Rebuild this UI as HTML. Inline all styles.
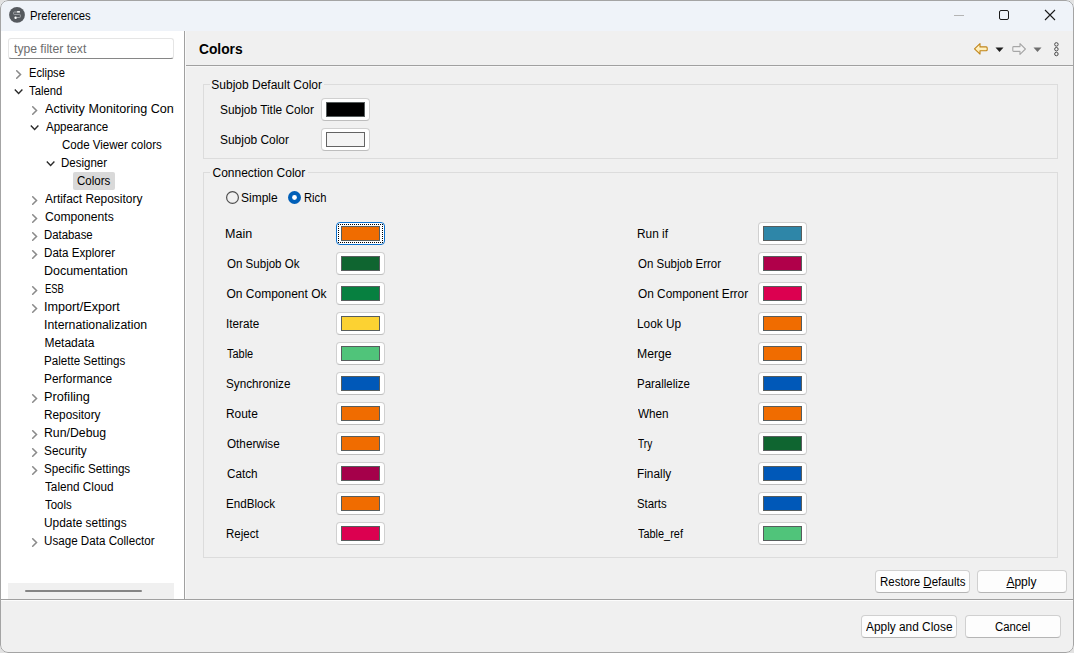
<!DOCTYPE html>
<html><head><meta charset="utf-8">
<style>
html,body{margin:0;padding:0;width:1074px;height:653px;overflow:hidden;background:#e2e2e2;}
body{font-family:"Liberation Sans", sans-serif;font-size:12px;color:#000;position:relative;}
.abs{position:absolute;}
.t{position:absolute;height:18px;line-height:18px;white-space:nowrap;transform-origin:0 0;}
.cb{position:absolute;box-sizing:border-box;width:49px;height:23px;background:#fff;border:1px solid #d0d0d0;border-bottom-color:#bdbdbd;border-radius:4px;}
.sw{position:absolute;box-sizing:border-box;width:39px;height:15px;border:1px solid #575d5d;}
.btn{position:absolute;box-sizing:border-box;height:23px;background:#fdfdfd;border:1px solid #d0d0d0;border-bottom-color:#b5b5b5;border-radius:4px;}
</style></head><body>
<div class="abs" style="left:0;top:0;width:1074px;height:653px;border-radius:8px;overflow:hidden;background:#f0f0f0">
  <!-- title bar -->
  <div class="abs" style="left:0;top:0;width:1074px;height:31px;background:#eff3f9"></div>
  <svg class="abs" style="left:8px;top:6px" width="18" height="18" viewBox="0 0 18 18">
    <circle cx="9" cy="8.9" r="7.9" fill="#55595e"/>
    <path d="M9.3 6 H6.2 Q5.6 6 5.6 6.6 V7.8 Q5.6 8.4 6.2 8.4 H11.7 Q12.3 8.4 12.3 9 V10.9 Q12.3 11.5 11.7 11.5 H9" fill="none" stroke="#a9acb0" stroke-width="0.9"/>
    <rect x="9.1" y="5.1" width="2.8" height="1.5" fill="#fff"/>
    <circle cx="7.6" cy="11.8" r="1.2" fill="#fff"/>
  </svg>
  <div class="t" style="left:29.76px;top:7px;transform:scaleX(0.9391);">Preferences</div>
  <div class="abs" style="left:954px;top:15px;width:10px;height:1px;background:#b4b4b4"></div>
  <div class="abs" style="left:999px;top:10px;width:8px;height:8px;border:1px solid #1a1a1a;border-radius:2px"></div>
  <svg class="abs" style="left:1044px;top:9px" width="12" height="12" viewBox="0 0 12 12"><path d="M1 1 L11 11 M11 1 L1 11" stroke="#1a1a1a" stroke-width="1.1"/></svg>

  <!-- left panel -->
  <div class="abs" style="left:1px;top:31px;width:183px;height:568px;background:#fff"></div>
  <div class="abs" style="left:8px;top:38px;width:166px;height:21px;box-sizing:border-box;background:#fff;border:1px solid #e5e5e5;border-bottom:1px solid #868686;border-radius:3px;"></div>
  <div class="t" style="left:14.00px;top:40px;transform:scaleX(1.0125);color:#6d6d6d;">type filter text</div>
  <div class="abs" style="left:0;top:0;width:174px;height:600px;overflow:hidden">
  <svg class="abs" style="left:13px;top:64px" width="10" height="18" viewBox="0 0 10 18"><path d="M3.7 6.7 L7.5 10.5 L3.7 14.3" fill="none" stroke="#8a8a8a" stroke-width="1.55" stroke-linecap="round"/></svg>
<div class="t" style="left:28.87px;top:64px;transform:scaleX(0.9263);">Eclipse</div>
<svg class="abs" style="left:13px;top:82px" width="12" height="18" viewBox="0 0 12 18"><path d="M1.8 7.6 L5.6 11.4 L9.4 7.6" fill="none" stroke="#2a2a2a" stroke-width="1.4"/></svg>
<div class="t" style="left:29.20px;top:82px;transform:scaleX(0.9400);">Talend</div>
<svg class="abs" style="left:29px;top:100px" width="10" height="18" viewBox="0 0 10 18"><path d="M3.7 6.7 L7.5 10.5 L3.7 14.3" fill="none" stroke="#8a8a8a" stroke-width="1.55" stroke-linecap="round"/></svg>
<div class="t" style="left:44.55px;top:100px;transform:scaleX(1.050)">Activity Monitoring Configuration</div>
<svg class="abs" style="left:29px;top:118px" width="12" height="18" viewBox="0 0 12 18"><path d="M1.8 7.6 L5.6 11.4 L9.4 7.6" fill="none" stroke="#2a2a2a" stroke-width="1.4"/></svg>
<div class="t" style="left:45.60px;top:118px;transform:scaleX(0.9615);">Appearance</div>
<div class="t" style="left:61.70px;top:136px;transform:scaleX(0.9615);">Code Viewer colors</div>
<svg class="abs" style="left:45px;top:154px" width="12" height="18" viewBox="0 0 12 18"><path d="M1.8 7.6 L5.6 11.4 L9.4 7.6" fill="none" stroke="#2a2a2a" stroke-width="1.4"/></svg>
<div class="t" style="left:60.74px;top:154px;transform:scaleX(0.9596);">Designer</div>
<div class="abs" style="left:73px;top:172px;width:42px;height:18px;background:#d9d9d9;border-radius:2px"></div>
<div class="t" style="left:77.40px;top:172px;transform:scaleX(0.9600);">Colors</div>
<svg class="abs" style="left:29px;top:190px" width="10" height="18" viewBox="0 0 10 18"><path d="M3.7 6.7 L7.5 10.5 L3.7 14.3" fill="none" stroke="#8a8a8a" stroke-width="1.55" stroke-linecap="round"/></svg>
<div class="t" style="left:45.20px;top:190px;transform:scaleX(0.9929);">Artifact Repository</div>
<svg class="abs" style="left:29px;top:208px" width="10" height="18" viewBox="0 0 10 18"><path d="M3.7 6.7 L7.5 10.5 L3.7 14.3" fill="none" stroke="#8a8a8a" stroke-width="1.55" stroke-linecap="round"/></svg>
<div class="t" style="left:45.20px;top:208px;transform:scaleX(1.0103);">Components</div>
<svg class="abs" style="left:29px;top:226px" width="10" height="18" viewBox="0 0 10 18"><path d="M3.7 6.7 L7.5 10.5 L3.7 14.3" fill="none" stroke="#8a8a8a" stroke-width="1.55" stroke-linecap="round"/></svg>
<div class="t" style="left:44.45px;top:226px;transform:scaleX(0.9480);">Database</div>
<svg class="abs" style="left:29px;top:244px" width="10" height="18" viewBox="0 0 10 18"><path d="M3.7 6.7 L7.5 10.5 L3.7 14.3" fill="none" stroke="#8a8a8a" stroke-width="1.55" stroke-linecap="round"/></svg>
<div class="t" style="left:44.43px;top:244px;transform:scaleX(0.9681);">Data Explorer</div>
<div class="t" style="left:44.36px;top:262px;transform:scaleX(1.0380);">Documentation</div>
<svg class="abs" style="left:29px;top:280px" width="10" height="18" viewBox="0 0 10 18"><path d="M3.7 6.7 L7.5 10.5 L3.7 14.3" fill="none" stroke="#8a8a8a" stroke-width="1.55" stroke-linecap="round"/></svg>
<div class="t" style="left:44.91px;top:280px;transform:scaleX(0.7870);">ESB</div>
<svg class="abs" style="left:29px;top:298px" width="10" height="18" viewBox="0 0 10 18"><path d="M3.7 6.7 L7.5 10.5 L3.7 14.3" fill="none" stroke="#8a8a8a" stroke-width="1.55" stroke-linecap="round"/></svg>
<div class="t" style="left:44.35px;top:298px;transform:scaleX(1.0507);">Import/Export</div>
<div class="t" style="left:44.38px;top:316px;transform:scaleX(1.0232);">Internationalization</div>
<div class="t" style="left:44.40px;top:334px;">Metadata</div>
<div class="t" style="left:44.43px;top:352px;transform:scaleX(0.9675);">Palette Settings</div>
<div class="t" style="left:44.41px;top:370px;transform:scaleX(0.9912);">Performance</div>
<svg class="abs" style="left:29px;top:388px" width="10" height="18" viewBox="0 0 10 18"><path d="M3.7 6.7 L7.5 10.5 L3.7 14.3" fill="none" stroke="#8a8a8a" stroke-width="1.55" stroke-linecap="round"/></svg>
<div class="t" style="left:44.34px;top:388px;transform:scaleX(1.0595);">Profiling</div>
<div class="t" style="left:44.41px;top:406px;transform:scaleX(0.9857);">Repository</div>
<svg class="abs" style="left:29px;top:424px" width="10" height="18" viewBox="0 0 10 18"><path d="M3.7 6.7 L7.5 10.5 L3.7 14.3" fill="none" stroke="#8a8a8a" stroke-width="1.55" stroke-linecap="round"/></svg>
<div class="t" style="left:44.38px;top:424px;transform:scaleX(1.0237);">Run/Debug</div>
<svg class="abs" style="left:29px;top:442px" width="10" height="18" viewBox="0 0 10 18"><path d="M3.7 6.7 L7.5 10.5 L3.7 14.3" fill="none" stroke="#8a8a8a" stroke-width="1.55" stroke-linecap="round"/></svg>
<div class="t" style="left:44.41px;top:442px;transform:scaleX(0.9857);">Security</div>
<svg class="abs" style="left:29px;top:460px" width="10" height="18" viewBox="0 0 10 18"><path d="M3.7 6.7 L7.5 10.5 L3.7 14.3" fill="none" stroke="#8a8a8a" stroke-width="1.55" stroke-linecap="round"/></svg>
<div class="t" style="left:44.43px;top:460px;transform:scaleX(0.9716);">Specific Settings</div>
<div class="t" style="left:45.40px;top:478px;transform:scaleX(0.9771);">Talend Cloud</div>
<div class="t" style="left:45.40px;top:496px;transform:scaleX(0.9536);">Tools</div>
<div class="t" style="left:44.41px;top:514px;transform:scaleX(0.9902);">Update settings</div>
<svg class="abs" style="left:29px;top:532px" width="10" height="18" viewBox="0 0 10 18"><path d="M3.7 6.7 L7.5 10.5 L3.7 14.3" fill="none" stroke="#8a8a8a" stroke-width="1.55" stroke-linecap="round"/></svg>
<div class="t" style="left:44.43px;top:532px;transform:scaleX(0.9690);">Usage Data Collector</div>
  </div>
  <div class="abs" style="left:8px;top:583px;width:166px;height:16px;background:#f0f0f0"></div>
  <div class="abs" style="left:25px;top:590px;width:117px;height:2px;background:#858585;border-radius:1px"></div>
  <div class="abs" style="left:184px;top:31px;width:1px;height:568px;background:#a0a0a0"></div>
  <div class="abs" style="left:185px;top:31px;width:1px;height:568px;background:#f9f9f9"></div>

  <!-- header -->
  <div class="t" style="left:199.00px;top:40px;transform:scaleX(0.9841);font-size:14px;"><b>Colors</b></div>
  <div class="abs" style="left:186px;top:65px;width:888px;height:1px;background:#a0a0a0"></div>
  <div class="abs" style="left:186px;top:66px;width:888px;height:1px;background:#f7f7f7"></div>
  <svg class="abs" style="left:972px;top:42px" width="17" height="14" viewBox="0 0 17 14"><defs><linearGradient id="bg1" x1="0" y1="0" x2="0" y2="1"><stop offset="0" stop-color="#fff8dc"/><stop offset="1" stop-color="#ffe7a0"/></linearGradient></defs><path d="M2.5 6.9 L8 1.6 V4.9 H14.2 Q15.2 4.9 15.2 5.9 V7.8 Q15.2 8.8 14.2 8.8 H8 V12.1 Z" fill="url(#bg1)" stroke="#c08418" stroke-width="1.1" stroke-linejoin="round"/></svg>
  <svg class="abs" style="left:995px;top:46.5px" width="9" height="6" viewBox="0 0 9 6"><path d="M0.5 0.5 H8.5 L4.5 5 Z" fill="#1e1e1e"/></svg>
  <svg class="abs" style="left:1011px;top:42px" width="17" height="14" viewBox="0 0 17 14"><path d="M14.4 7 L9 1.6 V4.6 H2.7 Q1.8 4.6 1.8 5.5 V8.5 Q1.8 9.4 2.7 9.4 H9 V12.4 Z" fill="#f4f4f4" stroke="#a6a6a6" stroke-width="1.1" stroke-linejoin="round"/></svg>
  <svg class="abs" style="left:1033px;top:46.5px" width="9" height="6" viewBox="0 0 9 6"><path d="M0.5 0.5 H8.5 L4.5 5 Z" fill="#6e6e6e"/></svg>
  <svg class="abs" style="left:1052px;top:41px" width="8" height="17" viewBox="0 0 8 17"><circle cx="4.4" cy="3.4" r="1.75" fill="none" stroke="#4a4a4a" stroke-width="1"/><circle cx="4.4" cy="8.2" r="1.75" fill="none" stroke="#4a4a4a" stroke-width="1"/><circle cx="4.4" cy="13" r="1.75" fill="none" stroke="#4a4a4a" stroke-width="1"/></svg>

  <!-- group 1 -->
  <div class="abs" style="left:203px;top:84px;width:855px;height:75px;box-sizing:border-box;border:1px solid #dcdcdc"></div>
  <div class="abs" style="left:210px;top:80px;width:114px;height:8px;background:#f0f0f0"></div>
  <div class="t" style="left:211.30px;top:76px;">Subjob Default Color</div>
  <div class="t" style="left:220.31px;top:101px;transform:scaleX(0.9915);">Subjob Title Color</div>
  <div class="cb" style="left:321px;top:98px"></div><div class="sw" style="left:326px;top:102px;background:#000"></div>
  <div class="t" style="left:220.31px;top:131px;transform:scaleX(0.9942);">Subjob Color</div>
  <div class="cb" style="left:321px;top:128px"></div><div class="sw" style="left:326px;top:132px;background:#f4f4f4;border-color:#646464"></div>

  <!-- group 2 -->
  <div class="abs" style="left:203px;top:172px;width:855px;height:386px;box-sizing:border-box;border:1px solid #dcdcdc"></div>
  <div class="abs" style="left:210px;top:168px;width:98px;height:8px;background:#f0f0f0"></div>
  <div class="t" style="left:212.50px;top:164px;">Connection Color</div>
  <svg class="abs" style="left:226px;top:191px" width="13" height="13" viewBox="0 0 13 13"><circle cx="6.5" cy="6.5" r="5.9" fill="none" stroke="#4f4f4f" stroke-width="1.2"/></svg>
  <div class="t" style="left:241.00px;top:189px;">Simple</div>
  <svg class="abs" style="left:288px;top:191px" width="13" height="13" viewBox="0 0 13 13"><circle cx="6.5" cy="6.5" r="6.5" fill="#005fb8"/><circle cx="6.5" cy="6.5" r="2.4" fill="#fff"/></svg>
  <div class="t" style="left:303.87px;top:189px;transform:scaleX(0.9304);">Rich</div>
  <div class="t" style="left:225.46px;top:225px;transform:scaleX(1.0440);">Main</div>
<div class="cb" style="left:336px;top:222px;border-color:#0a6fcc"></div><div class="abs" style="left:338px;top:224px;width:45px;height:19px;box-sizing:border-box;border:1px dotted #000"></div><div class="sw" style="left:341px;top:226px;background:#f06c00"></div>
<div class="t" style="left:226.50px;top:255px;transform:scaleX(0.9618);">On Subjob Ok</div>
<div class="cb" style="left:336px;top:252px"></div><div class="sw" style="left:341px;top:256px;background:#0f6530"></div>
<div class="t" style="left:226.50px;top:285px;">On Component Ok</div>
<div class="cb" style="left:336px;top:282px"></div><div class="sw" style="left:341px;top:286px;background:#078040"></div>
<div class="t" style="left:225.52px;top:315px;transform:scaleX(0.9758);">Iterate</div>
<div class="cb" style="left:336px;top:312px"></div><div class="sw" style="left:341px;top:316px;background:#fcd232"></div>
<div class="t" style="left:226.50px;top:345px;transform:scaleX(0.9138);">Table</div>
<div class="cb" style="left:336px;top:342px"></div><div class="sw" style="left:341px;top:346px;background:#50c47a"></div>
<div class="t" style="left:225.52px;top:375px;transform:scaleX(0.9754);">Synchronize</div>
<div class="cb" style="left:336px;top:372px"></div><div class="sw" style="left:341px;top:376px;background:#0058b8"></div>
<div class="t" style="left:225.51px;top:405px;transform:scaleX(0.9935);">Route</div>
<div class="cb" style="left:336px;top:402px"></div><div class="sw" style="left:341px;top:406px;background:#f06c00"></div>
<div class="t" style="left:226.50px;top:435px;transform:scaleX(0.9759);">Otherwise</div>
<div class="cb" style="left:336px;top:432px"></div><div class="sw" style="left:341px;top:436px;background:#f06c00"></div>
<div class="t" style="left:226.50px;top:465px;transform:scaleX(0.9774);">Catch</div>
<div class="cb" style="left:336px;top:462px"></div><div class="sw" style="left:341px;top:466px;background:#a5004a"></div>
<div class="t" style="left:225.53px;top:495px;transform:scaleX(0.9680);">EndBlock</div>
<div class="cb" style="left:336px;top:492px"></div><div class="sw" style="left:341px;top:496px;background:#f06c00"></div>
<div class="t" style="left:225.54px;top:525px;transform:scaleX(0.9576);">Reject</div>
<div class="cb" style="left:336px;top:522px"></div><div class="sw" style="left:341px;top:526px;background:#dc0050"></div>
<div class="t" style="left:637.41px;top:225px;transform:scaleX(0.9871);">Run if</div>
<div class="cb" style="left:758px;top:222px"></div><div class="sw" style="left:763px;top:226px;background:#2e86a8"></div>
<div class="t" style="left:638.40px;top:255px;transform:scaleX(0.9575);">On Subjob Error</div>
<div class="cb" style="left:758px;top:252px"></div><div class="sw" style="left:763px;top:256px;background:#b0004a"></div>
<div class="t" style="left:638.40px;top:285px;transform:scaleX(0.9884);">On Component Error</div>
<div class="cb" style="left:758px;top:282px"></div><div class="sw" style="left:763px;top:286px;background:#dc0050"></div>
<div class="t" style="left:637.41px;top:315px;transform:scaleX(0.9864);">Look Up</div>
<div class="cb" style="left:758px;top:312px"></div><div class="sw" style="left:763px;top:316px;background:#f06c00"></div>
<div class="t" style="left:637.38px;top:345px;transform:scaleX(1.0182);">Merge</div>
<div class="cb" style="left:758px;top:342px"></div><div class="sw" style="left:763px;top:346px;background:#f06c00"></div>
<div class="t" style="left:637.44px;top:375px;transform:scaleX(0.9556);">Parallelize</div>
<div class="cb" style="left:758px;top:372px"></div><div class="sw" style="left:763px;top:376px;background:#0058b8"></div>
<div class="t" style="left:638.40px;top:405px;transform:scaleX(0.9774);">When</div>
<div class="cb" style="left:758px;top:402px"></div><div class="sw" style="left:763px;top:406px;background:#f06c00"></div>
<div class="t" style="left:638.40px;top:435px;transform:scaleX(0.8412);">Try</div>
<div class="cb" style="left:758px;top:432px"></div><div class="sw" style="left:763px;top:436px;background:#0f6530"></div>
<div class="t" style="left:637.41px;top:465px;transform:scaleX(0.9853);">Finally</div>
<div class="cb" style="left:758px;top:462px"></div><div class="sw" style="left:763px;top:466px;background:#0058b8"></div>
<div class="t" style="left:637.45px;top:495px;transform:scaleX(0.9467);">Starts</div>
<div class="cb" style="left:758px;top:492px"></div><div class="sw" style="left:763px;top:496px;background:#0058b8"></div>
<div class="t" style="left:638.40px;top:525px;transform:scaleX(0.9100);">Table_ref</div>
<div class="cb" style="left:758px;top:522px"></div><div class="sw" style="left:763px;top:526px;background:#50c47a"></div>

  <!-- buttons -->
  <div class="btn" style="left:875px;top:570px;width:95px"></div>
  <div class="t" style="left:879.74px;top:573px;transform:scaleX(0.9557);">Restore <u>D</u>efaults</div>
  <div class="btn" style="left:977px;top:570px;width:90px"></div>
  <div class="t" style="left:1006.40px;top:573px;"><u>A</u>pply</div>
  <div class="abs" style="left:0;top:599px;width:1074px;height:1px;background:#a0a0a0"></div>
  <div class="abs" style="left:0;top:600px;width:1074px;height:1px;background:#fcfcfc"></div>
  <div class="btn" style="left:861px;top:615px;width:96px"></div>
  <div class="t" style="left:866.10px;top:618px;transform:scaleX(0.9897);">Apply and Close</div>
  <div class="btn" style="left:965px;top:615px;width:96px"></div>
  <div class="t" style="left:995.40px;top:618px;transform:scaleX(0.9459);">Cancel</div>

  <div class="abs" style="left:153px;top:0;width:205px;height:1px;background:#2a7a48"></div>
  <!-- window border -->
  <div class="abs" style="left:0;top:0;width:1074px;height:653px;box-sizing:border-box;border:1px solid #a4a4a4;border-radius:8px"></div>
</div>
</body></html>
